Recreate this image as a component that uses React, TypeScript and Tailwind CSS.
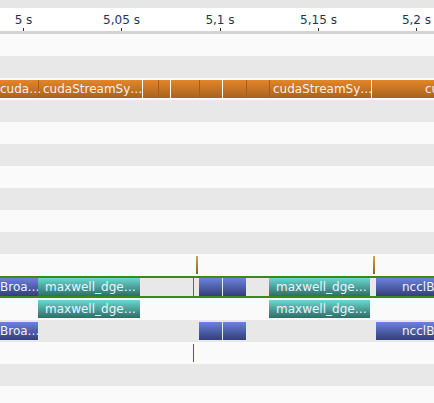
import React from "react";

const font = { fontFamily: '"DejaVu Sans", "Liberation Sans", sans-serif' };

type Bar = { left: number; width: number; label?: string; pad?: number; kind: "blue" | "teal" };

const gradBlue = "bg-gradient-to-b from-[#6c82dc] to-[#343f78]";
const gradTeal = "bg-gradient-to-b from-[#6ad8d2] to-[#2e6e66]";

function Bars({ bars }: { bars: Bar[] }) {
  return (
    <>
      {bars.map((b, i) => (
        <div
          key={i}
          className={`absolute top-[2px] h-[18px] overflow-hidden whitespace-nowrap text-[12px] leading-[18px] text-[#eef2ff] ${
            b.kind === "blue" ? gradBlue : gradTeal
          }`}
          style={{ left: b.left, width: b.width, paddingLeft: b.pad ?? 0 }}
        >
          {b.label}
        </div>
      ))}
    </>
  );
}

function Row({ light, children, className = "" }: { light: boolean; children?: React.ReactNode; className?: string }) {
  return (
    <div className={`relative h-[22px] shrink-0 overflow-hidden ${light ? "bg-[#fafafa]" : "bg-[#e8e8e8]"} ${className}`}>
      {children}
    </div>
  );
}

const ticks = [
  { x: 23.5, label: "5 s" },
  { x: 121.5, label: "5,05 s" },
  { x: 220, label: "5,1 s" },
  { x: 318.5, label: "5,15 s" },
  { x: 416.5, label: "5,2 s" },
];

const orangeLines: { x: number; white: boolean }[] = [
  { x: 38, white: false },
  { x: 142, white: true },
  { x: 158, white: false },
  { x: 170, white: true },
  { x: 199, white: false },
  { x: 222, white: true },
  { x: 246, white: false },
  { x: 269, white: false },
  { x: 371, white: true },
];

export default function App() {
  return (
    <div className="flex h-[403px] w-[434px] flex-col overflow-hidden bg-[#fafafa]" style={font}>
      <div className="h-[8px] shrink-0 bg-[#e6e6e6]" />
      {/* ruler */}
      <div className="relative h-[23px] shrink-0 bg-white">
        {ticks.map((t, i) => (
          <React.Fragment key={i}>
            <div
              className="absolute top-[5px] -translate-x-1/2 whitespace-nowrap text-[12px] leading-[14px] text-[#1e3556]"
              style={{ left: t.x }}
            >
              {t.label}
            </div>
            <div className="absolute bottom-0 h-[3px] w-px bg-[#333]" style={{ left: Math.floor(t.x) }} />
          </React.Fragment>
        ))}
      </div>
      <div className="h-[3px] shrink-0 bg-[#d4d4d4]" />

      <Row light />
      <Row light={false} />
      <Row light>
        <div className="absolute left-0 right-0 top-[2px] h-[18px] bg-gradient-to-b from-[#e3862a] to-[#a9621e]" />
        {orangeLines.map((l, i) => (
          <div
            key={i}
            className={`absolute top-[2px] h-[18px] w-px ${l.white ? "bg-white" : "bg-[#a35d1c]"}`}
            style={{ left: l.x }}
          />
        ))}
        <div className="absolute left-0 top-[2px] h-[18px] whitespace-nowrap text-[12px] leading-[18px] text-[#f5f0ea]">cuda…</div>
        <div className="absolute left-[43px] top-[2px] h-[18px] whitespace-nowrap text-[12px] leading-[18px] text-[#f5f0ea]">cudaStreamSy…</div>
        <div className="absolute left-[273px] top-[2px] h-[18px] whitespace-nowrap text-[12px] leading-[18px] text-[#f5f0ea]">cudaStreamSy…</div>
        <div className="absolute left-[425px] top-[2px] h-[18px] whitespace-nowrap text-[12px] leading-[18px] text-[#f5f0ea]">cuda…</div>
      </Row>
      <Row light={false} />
      <Row light />
      <Row light={false} />
      <Row light />
      <Row light={false} />
      <Row light />
      <Row light={false} />
      <Row light>
        <div className="absolute left-[196px] top-[2px] h-[18px] w-[2px] bg-gradient-to-b from-[#cfa648] to-[#86661e]" />
        <div className="absolute left-[373px] top-[2px] h-[18px] w-[2px] bg-gradient-to-b from-[#cfa648] to-[#86661e]" />
      </Row>
      {/* selected row */}
      <div className="relative h-[22px] shrink-0 overflow-hidden border-y-2 border-[#3b8a16] bg-[#e8e8e8]">
        <div className="absolute left-[193px] top-0 h-[18px] w-px bg-[#7a6530]" />
        {[
          { left: 0, width: 38, label: "Broa…", kind: "blue" as const },
          { left: 38, width: 102, label: "maxwell_dge…", pad: 7, kind: "teal" as const },
          { left: 199, width: 23, kind: "blue" as const },
          { left: 223, width: 23, kind: "blue" as const },
          { left: 269, width: 101, label: "maxwell_dge…", pad: 7, kind: "teal" as const },
          { left: 376, width: 58, label: "ncclBroa…", pad: 26, kind: "blue" as const },
        ].map((b, i) => (
          <div
            key={i}
            className={`absolute top-0 h-[18px] overflow-hidden whitespace-nowrap text-[12px] leading-[18px] text-[#eef2ff] ${
              b.kind === "blue" ? gradBlue : gradTeal
            }`}
            style={{ left: b.left, width: b.width, paddingLeft: b.pad ?? 0 }}
          >
            {b.label}
          </div>
        ))}
      </div>
      <Row light>
        <Bars
          bars={[
            { left: 38, width: 102, label: "maxwell_dge…", pad: 7, kind: "teal" },
            { left: 269, width: 101, label: "maxwell_dge…", pad: 7, kind: "teal" },
          ]}
        />
      </Row>
      <Row light={false}>
        <Bars
          bars={[
            { left: 0, width: 38, label: "Broa…", kind: "blue" },
            { left: 199, width: 23, kind: "blue" },
            { left: 223, width: 23, kind: "blue" },
            { left: 376, width: 58, label: "ncclBroa…", pad: 26, kind: "blue" },
          ]}
        />
      </Row>
      <Row light>
        <div className="absolute left-[193px] top-[2px] h-[18px] w-px bg-[#6a5a30]" />
      </Row>
      <Row light={false} />
      <Row light />
    </div>
  );
}
